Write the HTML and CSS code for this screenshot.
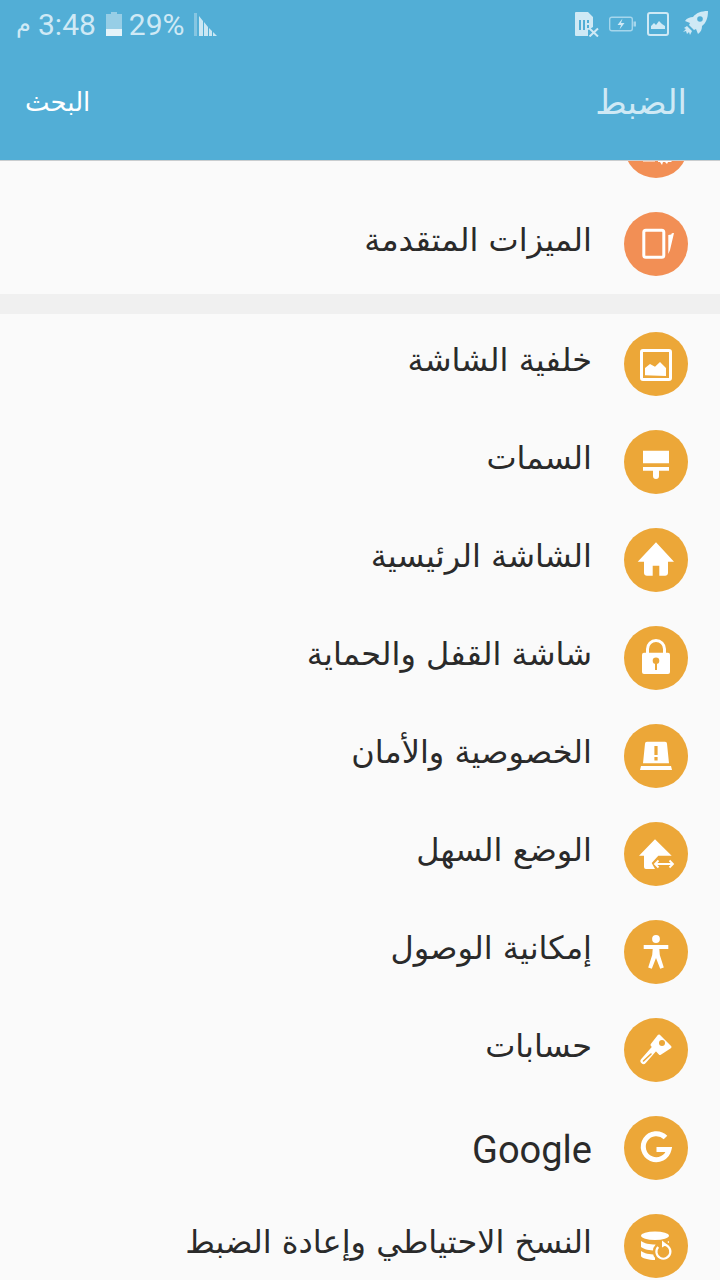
FILE: index.html
```html
<!DOCTYPE html>
<html lang="ar" dir="rtl">
<head>
    <meta charset="UTF-8">
    <meta name="viewport" content="width=device-width, initial-scale=1.0">
    <title>الضبط</title>
    <link rel="stylesheet" href="styles.css">
</head>
<body>
    <div class="app-header">
        <div class="status-bar" dir="ltr">
            <div class="status-left">
                <span class="status-ampm">م</span>
                <span class="status-time">3:48</span>
                <svg class="st-battery" width="16" height="24" viewBox="0 0 16 24"><path d="M0 2h5V0h6v2h5v22H0z" fill="#fff" opacity=".4"/><path d="M0 17h16v7H0z" fill="#fff" opacity=".75"/></svg>
                <span class="status-pct">29%</span>
                <svg class="st-signal" width="24" height="24" viewBox="0 0 24 24"><path d="M0 1h3v23H0z" fill="#fff" opacity=".3"/><path d="M5 4l4 5v15H5zM10 10l4 5v9h-4zM15 16l3 3v5h-3zM19 20l4 4h-4z" fill="#fff" opacity=".7"/></svg>
            </div>
            <div class="status-right">
                <svg width="24" height="25" viewBox="0 0 24 25"><path d="M1 0h12l5 5v10l-5 3v6H1a1 1 0 0 1-1-1V1a1 1 0 0 1 1-1z" fill="#cfe9f5"/><path d="M4 8h2v10H4zM8 8h2v10H8zM12 8h2v3h-2zM12 13h2v3h-2z" fill="#52aed6"/><path d="M14.500 16.500l8.500 8M23 16.500l-8.500 8" stroke="#cfe9f5" stroke-width="2"/></svg>
                <svg class="st-charge" width="27" height="16" viewBox="0 0 27 16"><rect x=".7" y="1.200" width="22.600" height="13.600" rx="2" fill="none" stroke="#a5d6ec" stroke-width="1.400"/><path d="M24.500 5.500H27v5h-2.500z" fill="#a5d6ec"/><path d="M13.500 2.500L8.500 9h3.500l-1.500 4.500L15.500 7H12z" fill="#cfe9f5"/></svg>
                <svg width="22" height="24" viewBox="0 0 22 24"><rect x="1" y="1" width="20" height="22" rx="2" fill="none" stroke="#cfe9f5" stroke-width="2"/><path d="M4 17v-3l3-3 2 2 3-4 3 3 3 2v3z" fill="#cfe9f5"/></svg>
                <svg class="st-rocket" width="26" height="26" viewBox="0 0 26 26"><path d="M26 0c-7 0-12 2-15 6-3 0-6 1-8 4l5 2-1 2 5 5 2-1 2 5c3-2 4-5 4-8 4-3 6-8 6-15z" fill="#cfe9f5"/><circle cx="18" cy="8" r="2.800" fill="#52aed6"/><path d="M5 15l-3 2 2 1-3 3 3-1 1 3 2-2 1 3 2-4z" fill="#cfe9f5"/></svg>
            </div>
        </div>
        <div class="toolbar">
            <div class="toolbar-title">الضبط</div>
            <div class="toolbar-search">البحث</div>
        </div>
    </div>

    <div class="list-view">
        <div class="section">
            <div class="row row-cut">
                <div class="ico ico-orange">
                    <svg viewBox="0 0 64 64"><path d="M19 46h12v1.500H19zM34 46h15l-2 2h-3l-1 2-2-2h-2l-1 3-2-3h-2z" fill="#fff"/></svg>
                </div>
            </div>
            <div class="row">
                <div class="ico ico-orange">
                    <svg viewBox="0 0 64 64"><rect x="19.800" y="18.200" width="20" height="27" rx="2" fill="none" stroke="#fff" stroke-width="3"/><path d="M44.300 23l3-.5.500-1.200 2.200-.3-4 17-1.700 4z" fill="#fff"/></svg>
                </div>
                <div class="row-label">الميزات المتقدمة</div>
            </div>
        </div>

        <div class="section">
            <div class="row">
                <div class="ico">
                    <svg viewBox="0 0 64 64"><rect x="17.500" y="18.500" width="29" height="29" rx="1.500" fill="none" stroke="#fff" stroke-width="3"/><path d="M21 43.300V36l5-4 5 2.700 5-4.700 6 6v8z" fill="#fff"/></svg>
                </div>
                <div class="row-label">خلفية الشاشة</div>
            </div>
            <div class="row">
                <div class="ico">
                    <svg viewBox="0 0 64 64"><path d="M19 20.700h26v12.600H19zM19 37h26v3.700H19zM29 40.700h6V46a3 3 0 0 1-6 0z" fill="#fff"/></svg>
                </div>
                <div class="row-label">السمات</div>
            </div>
            <div class="row">
                <div class="ico">
                    <svg viewBox="0 0 64 64"><path d="M32 14.300L50 33.700h-6V45a3 3 0 0 1-3 2.700h-5.700v-10h-6.600v10H23a3 3 0 0 1-3-2.700V33.700h-6.300z" fill="#fff"/></svg>
                </div>
                <div class="row-label">الشاشة الرئيسية</div>
            </div>
            <div class="row">
                <div class="ico">
                    <svg viewBox="0 0 64 64"><path d="M23.500 27v-4a8.500 8.500 0 0 1 17 0v4" fill="none" stroke="#fff" stroke-width="3"/><path d="M20 26.700h24a2 2 0 0 1 2 2V46a2 2 0 0 1-2 2H20a2 2 0 0 1-2-2V28.700a2 2 0 0 1 2-2z" fill="#fff"/><circle cx="32" cy="34.700" r="3.300" fill="#eca738"/><path d="M31 35h2v9h-2z" fill="#eca738"/></svg>
                </div>
                <div class="row-label">شاشة القفل والحماية</div>
            </div>
            <div class="row">
                <div class="ico">
                    <svg viewBox="0 0 64 64"><path d="M23 17.700h18a2 2 0 0 1 2 2l2 19.600H19l2-19.600a2 2 0 0 1 2-2z" fill="#fff"/><path d="M17 42h30l1 4H16z" fill="#fff"/><path d="M30.400 22h3.200v9h-3.200zM30.400 33h3.200v3.500h-3.200z" fill="#eca738"/></svg>
                </div>
                <div class="row-label">الخصوصية والأمان</div>
            </div>
            <div class="row">
                <div class="ico">
                    <svg viewBox="0 0 64 64"><path d="M31 17.300L47.700 33.700H34.300L27.700 41l3.300 6h-9a2 2 0 0 1-2-2V33.700h-5z" fill="#fff"/><path d="M32 42h16M34.500 38.500L31 42l3.500 3.500M45.500 38.500L49 42l-3.500 3.500" fill="none" stroke="#fff" stroke-width="1.800"/></svg>
                </div>
                <div class="row-label">الوضع السهل</div>
            </div>
            <div class="row">
                <div class="ico">
                    <svg viewBox="0 0 64 64"><circle cx="32" cy="19" r="3.900" fill="#fff"/><path d="M19.700 25h24.600v4h-9l.5 6 4 12.500-3.600 1.300L32 38l-4.200 10.800-3.600-1.300 4-12.500.5-6h-9z" fill="#fff"/></svg>
                </div>
                <div class="row-label">إمكانية الوصول</div>
            </div>
            <div class="row">
                <div class="ico">
                    <svg viewBox="0 0 64 64"><path d="M35 18l11 11-10 6.500-8-8.500z" fill="#fff" stroke="#fff" stroke-width="3" stroke-linejoin="round"/><path d="M30 31L19.500 43" stroke="#fff" stroke-width="6" stroke-linecap="round"/><path d="M27 36l-7.500 7" stroke="#eca738" stroke-width="1.600" stroke-linecap="round"/><circle cx="38" cy="25" r="3" fill="#eca738"/></svg>
                </div>
                <div class="row-label">حسابات</div>
            </div>
            <div class="row">
                <div class="ico">
                    <svg viewBox="0 0 64 64"><path d="M41.500 21.500A13 13 0 1 0 45 33.500H32.500" fill="none" stroke="#fff" stroke-width="5"/></svg>
                </div>
                <div class="row-label row-label-latin" dir="ltr">Google</div>
            </div>
            <div class="row">
                <div class="ico">
                    <svg viewBox="0 0 64 64"><ellipse cx="31" cy="21.800" rx="14" ry="4.200" fill="#fff"/><path d="M17 27c3 2.500 9 3.500 14 3.500S42 29.500 45 27v6c-3 2.500-9 3.500-14 3.500S20 35.500 17 33zM17 37c3 2.500 9 3.500 14 3.500v5.500c-6 0-14-2-14-4z" fill="#fff"/><circle cx="39.300" cy="37.700" r="10.500" fill="#eca738"/><path d="M34.200 33a7 7 0 1 0 5.100-2.300" fill="none" stroke="#fff" stroke-width="2.200"/><path d="M38 26.500l5 4-5 3z" fill="#fff"/></svg>
                </div>
                <div class="row-label">النسخ الاحتياطي وإعادة الضبط</div>
            </div>
        </div>
    </div>
</body>
</html>
```

FILE: styles.css
```css
* {
    margin: 0;
    padding: 0;
    box-sizing: border-box;
}

html, body {
    width: 720px;
    height: 1280px;
    overflow: hidden;
}

body {
    font-family: 'DejaVu Sans', 'Noto Sans', sans-serif;
    background-color: #fafafa;
    color: #2a2a2a;
}

.app-header {
    position: relative;
    z-index: 2;
    height: 161px;
    background-color: #52aed6;
    border-bottom: 1px solid #c9cdcf;
}

/* Status bar */
.status-bar {
    display: flex;
    justify-content: space-between;
    align-items: center;
    height: 50px;
    padding: 0 12px 2px 16px;
    color: #cfe9f5;
    font-family: Roboto, sans-serif;
    font-size: 30px;
}

.status-left, .status-right {
    display: flex;
    align-items: center;
}

.status-ampm {
    font-size: 24px;
    margin-right: 7px;
}

.st-battery {
    margin: 0 7px 0 10px;
}

.st-signal {
    margin-left: 9px;
}

.status-right {
    gap: 11px;
}

.st-charge {
    margin-left: -1px;
}

.st-rocket {
    margin-left: 2px;
}

/* Toolbar */
.toolbar {
    display: flex;
    justify-content: space-between;
    align-items: center;
    height: 104px;
    padding: 0 33px 0 25px;
}

.toolbar-title {
    font-size: 34px;
    color: #cfe9f5;
}

.toolbar-search {
    font-size: 26px;
    color: #fff;
}

/* List */
.list-view {
    margin-top: -64px;
    background-color: #f0f0f0;
}

.section {
    padding-bottom: 1px;
    background-color: #fafafa;
    margin-bottom: 20px;
}

.section + .section {
    padding-top: 1px;
}

.row {
    display: flex;
    align-items: center;
    gap: 32px;
    height: 98px;
    padding-right: 32px;
}

.ico {
    flex: 0 0 64px;
    width: 64px;
    height: 64px;
    border-radius: 50%;
    background-color: #eca738;
}

.ico svg {
    display: block;
    width: 64px;
    height: 64px;
}

.ico-orange {
    background-color: #f28f55;
}

.row-label {
    font-size: 32px;
    line-height: 40px;
    padding-bottom: 8px;
}

.row-label-latin {
    font-family: Roboto, sans-serif;
    font-size: 38px;
    padding-bottom: 0;
    padding-top: 4px;
}
```
